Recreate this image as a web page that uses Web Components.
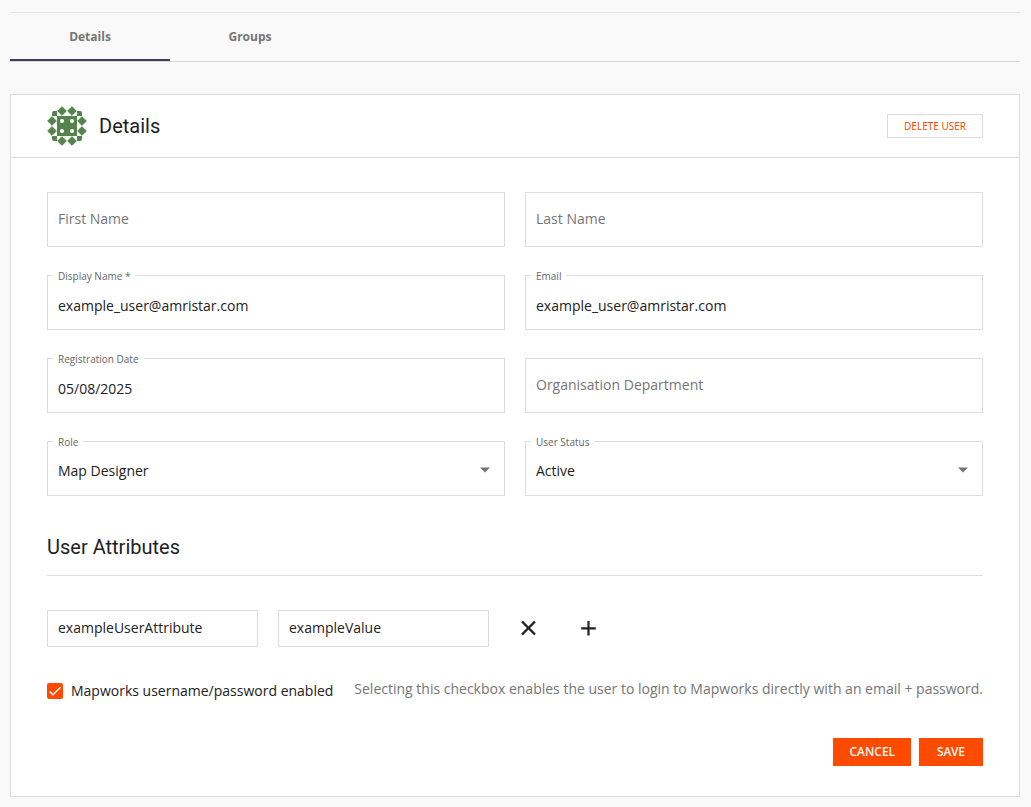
<!DOCTYPE html>
<html lang="en">
<head>
<meta charset="utf-8">
<title>User details</title>
<style>
  :root {
    --ink: #212121;
    --muted: #757575;
    --line: #dddddd;
    --accent: #ff4b00;
    --ui: "Open Sans", "Noto Sans", sans-serif;
    --button: "Noto Sans", "Open Sans", sans-serif;
    --heading: Roboto, "Liberation Sans", sans-serif;
  }
  body {
    margin: 0;
    padding: 12px 11px 10px 10px;
    background: #f9f9f9;
    color: var(--ink);
    font: 14px/20px var(--ui);
  }
</style>
</head>
<body>
<user-page></user-page>

<script>
const define = (name, html, setup) => {
  const template = document.createElement('template');
  template.innerHTML = '<style>*{box-sizing:border-box}</style>' + html;
  customElements.define(name, class extends HTMLElement {
    connectedCallback() {
      if (this.shadowRoot) return;
      const root = this.attachShadow({ mode: 'open' });
      root.append(template.content.cloneNode(true));
      if (setup) setup(this, root);
    }
  });
};

define('tab-bar', `
  <style>
    :host { display: flex; border-top: 1px solid #e4e4e4; border-bottom: 1px solid #d8d8d8; }
  </style>
  <slot></slot>`);

define('tab-item', `
  <style>
    :host { display: block; width: 160px; }
    button {
      display: block; width: 100%; height: 48px; padding: 2px 0 0; border: 0;
      border-bottom: 2px solid transparent; background: none;
      color: var(--muted); font: 700 12px/20px var(--ui);
    }
    :host([active]) button { border-color: #3d3d56; }
  </style>
  <button type="button" role="tab"><slot></slot></button>`,
  (host, root) => root.querySelector('button').setAttribute('aria-selected', host.hasAttribute('active')));

define('user-avatar', `
  <style>:host { display: block; } svg { display: block; }</style>
  <svg width="40" height="40" viewBox="0 0 40 40" fill="#54834b" aria-hidden="true">
    <path d="M10 10h20v20H10z"/>
    <path stroke="#54834b" stroke-linejoin="round" d="M15 .7l4.300 4.300-4.300 4.300-4.300-4.300zM25 .7l4.300 4.300-4.300 4.300-4.300-4.300zM15 30.700l4.300 4.300-4.300 4.300-4.300-4.300zM25 30.700l4.300 4.300-4.300 4.300-4.300-4.300zM5 10.700l4.300 4.300-4.300 4.300-4.300-4.300zM5 20.700l4.300 4.300-4.300 4.300-4.300-4.300zM35 10.700l4.300 4.300-4.300 4.300-4.300-4.300zM35 20.700l4.300 4.300-4.300 4.300-4.300-4.300z"/>
    <path d="M10 5v5H5V7Q5 5 7 5zM30 5v5h5V7Q35 5 33 5zM10 35v-5H5v3Q5 35 7 35zM30 35v-5h5v3Q35 35 33 35z"/>
    <g fill="#fff"><circle cx="15" cy="15" r="2.100"/><circle cx="25" cy="15" r="2.100"/><circle cx="15" cy="25" r="2.100"/><circle cx="25" cy="25" r="2.100"/></g>
  </svg>`);

define('panel-card', `
  <style>
    :host { display: block; background: #fff; border: 1px solid var(--line); }
    header { display: flex; align-items: center; gap: 12px; height: 63px; padding: 0 36px; border-bottom: 1px solid var(--line); }
    h1 { flex: 1; margin: 0; font: 400 20px/24px var(--heading); }
    .body { padding: 34px 36px 30px; }
  </style>
  <header><slot name="icon"></slot><h1><slot name="title"></slot></h1><slot name="action"></slot></header>
  <div class="body"><slot></slot></div>`);

define('app-button', `
  <style>
    :host { display: block; }
    button {
      display: block; min-width: 64px; height: 28px; padding: 0 16px; border: 0;
      background: var(--accent); color: #fff; font: 500 12px/16px var(--button);
      text-transform: uppercase;
    }
    :host([outlined]) button {
      height: 24px; border: 1px solid var(--line);
      background: #fff; color: var(--accent); font-size: 10px; font-weight: 400;
    }
  </style>
  <button type="button"><slot></slot></button>`);

const fieldStyle = `
  <style>
    :host { display: block; position: relative; min-width: 0; }
    input, select {
      display: block; width: 100%; height: 55px; margin: 0; padding: 6px 10px 0;
      border: 1px solid var(--line); border-radius: 0; outline: 0;
      background: #fff; color: var(--ink); font: 14px/20px var(--ui);
    }
    select { appearance: none; padding: 4px 40px 0 10px; }
    label { position: absolute; top: -7px; left: 6px; padding: 0 5px; background: #fff; color: #666; font: 10px/16px var(--ui); }
    .empty label { top: 17px; background: none; color: var(--muted); font: 14px/20px var(--ui); }
    :host([compact]) input { height: 37px; padding: 0 10px 2px; }
    svg { position: absolute; right: 15px; top: 26px; pointer-events: none; }
  </style>`;

define('text-field', fieldStyle + `
  <div><input id="control" type="text"><label for="control"></label></div>`,
  (host, root) => {
    const input = root.querySelector('input');
    const label = root.querySelector('label');
    input.value = host.getAttribute('value') || '';
    if (host.hasAttribute('compact')) {
      input.setAttribute('aria-label', host.getAttribute('label'));
      label.remove();
      return;
    }
    label.textContent = host.getAttribute('label');
    const sync = () => root.querySelector('div').classList.toggle('empty', !input.value);
    input.addEventListener('input', sync);
    sync();
  });

define('select-field', fieldStyle + `
  <select id="control"></select><label for="control"></label>
  <svg width="10" height="6" viewBox="0 0 10 6" aria-hidden="true"><path d="M0 .5h10l-5 5z" fill="#757575"/></svg>`,
  (host, root) => {
    root.querySelector('label').textContent = host.getAttribute('label');
    const select = root.querySelector('select');
    for (const name of host.getAttribute('options').split(',')) select.add(new Option(name));
  });

define('icon-button', `
  <style>
    :host { display: block; }
    button { display: grid; place-items: center; width: 40px; height: 37px; padding: 0 0 2px; border: 0; background: none; color: var(--ink); }
    svg { display: none; }
    :host([icon=remove]) .remove, :host([icon=add]) .add { display: block; }
  </style>
  <button type="button">
    <svg class="remove" width="24" height="24" viewBox="0 0 24 24"><path fill="none" stroke="currentColor" stroke-width="2.400" d="M5 5.500l13 13M18 5.500l-13 13"/></svg>
    <svg class="add" width="24" height="24" viewBox="0 0 24 24"><path fill="none" stroke="currentColor" stroke-width="2.200" d="M11.500 5v14.600M4.200 12.300h14.600"/></svg>
  </button>`,
  (host, root) => root.querySelector('button').setAttribute('aria-label', host.getAttribute('label')));

define('check-box', `
  <style>
    :host { display: block; }
    label { display: flex; align-items: center; gap: 8px; font: 14px/20px var(--ui); white-space: nowrap; }
    span { display: grid; width: 16px; height: 16px; }
    input, svg { grid-area: 1 / 1; width: 16px; height: 16px; margin: 0; }
    input { appearance: none; border: 2px solid #757575; border-radius: 2px; background: #fff; }
    input:checked { border-color: var(--accent); background: var(--accent); }
    svg { pointer-events: none; }
  </style>
  <label><span><input type="checkbox" checked><svg viewBox="0 0 24 24"><path fill="none" stroke="#fff" stroke-width="2.130" d="M4.100 12.700L9 17.600 20.300 6.300"/></svg></span><slot></slot></label>`);

define('user-page', `
  <style>
    :host { display: block; }
    tab-bar { margin-bottom: 32px; }
    .grid { display: grid; grid-template-columns: 1fr 1fr; gap: 28px 20px; }
    h2 { margin: 39px 0 34px; padding-bottom: 16px; border-bottom: 1px solid var(--line); font: 400 20px/24px var(--heading); }
    .attributes { display: flex; align-items: center; gap: 20px; }
    .attributes text-field { width: 211px; }
    .login { display: flex; flex-wrap: wrap; align-items: center; justify-content: space-between; margin: 32px 0 35px; }
    .login p { margin: 0; padding-bottom: 4px; color: var(--muted); font: 14px/20px var(--ui); }
    .buttons { display: flex; justify-content: flex-end; gap: 8px; }
  </style>
  <tab-bar role="tablist"><tab-item active>Details</tab-item><tab-item>Groups</tab-item></tab-bar>
  <panel-card>
    <user-avatar slot="icon"></user-avatar>
    <span slot="title">Details</span>
    <app-button slot="action" outlined>Delete user</app-button>
    <div class="grid">
      <text-field label="First Name"></text-field>
      <text-field label="Last Name"></text-field>
      <text-field label="Display Name *" value="example_user@amristar.com"></text-field>
      <text-field label="Email" value="example_user@amristar.com"></text-field>
      <text-field label="Registration Date" value="05/08/2025"></text-field>
      <text-field label="Organisation Department"></text-field>
      <select-field label="Role" options="Map Designer"></select-field>
      <select-field label="User Status" options="Active"></select-field>
    </div>
    <h2>User Attributes</h2>
    <div class="attributes">
      <text-field compact label="Attribute name" value="exampleUserAttribute"></text-field>
      <text-field compact label="Attribute value" value="exampleValue"></text-field>
      <icon-button icon="remove" label="Remove attribute"></icon-button>
      <icon-button icon="add" label="Add attribute"></icon-button>
    </div>
    <div class="login">
      <check-box>Mapworks username/password enabled</check-box>
      <p>Selecting this checkbox enables the user to login to Mapworks directly with an email + password.</p>
    </div>
    <div class="buttons"><app-button>Cancel</app-button><app-button>Save</app-button></div>
  </panel-card>`);
</script>
</body>
</html>
